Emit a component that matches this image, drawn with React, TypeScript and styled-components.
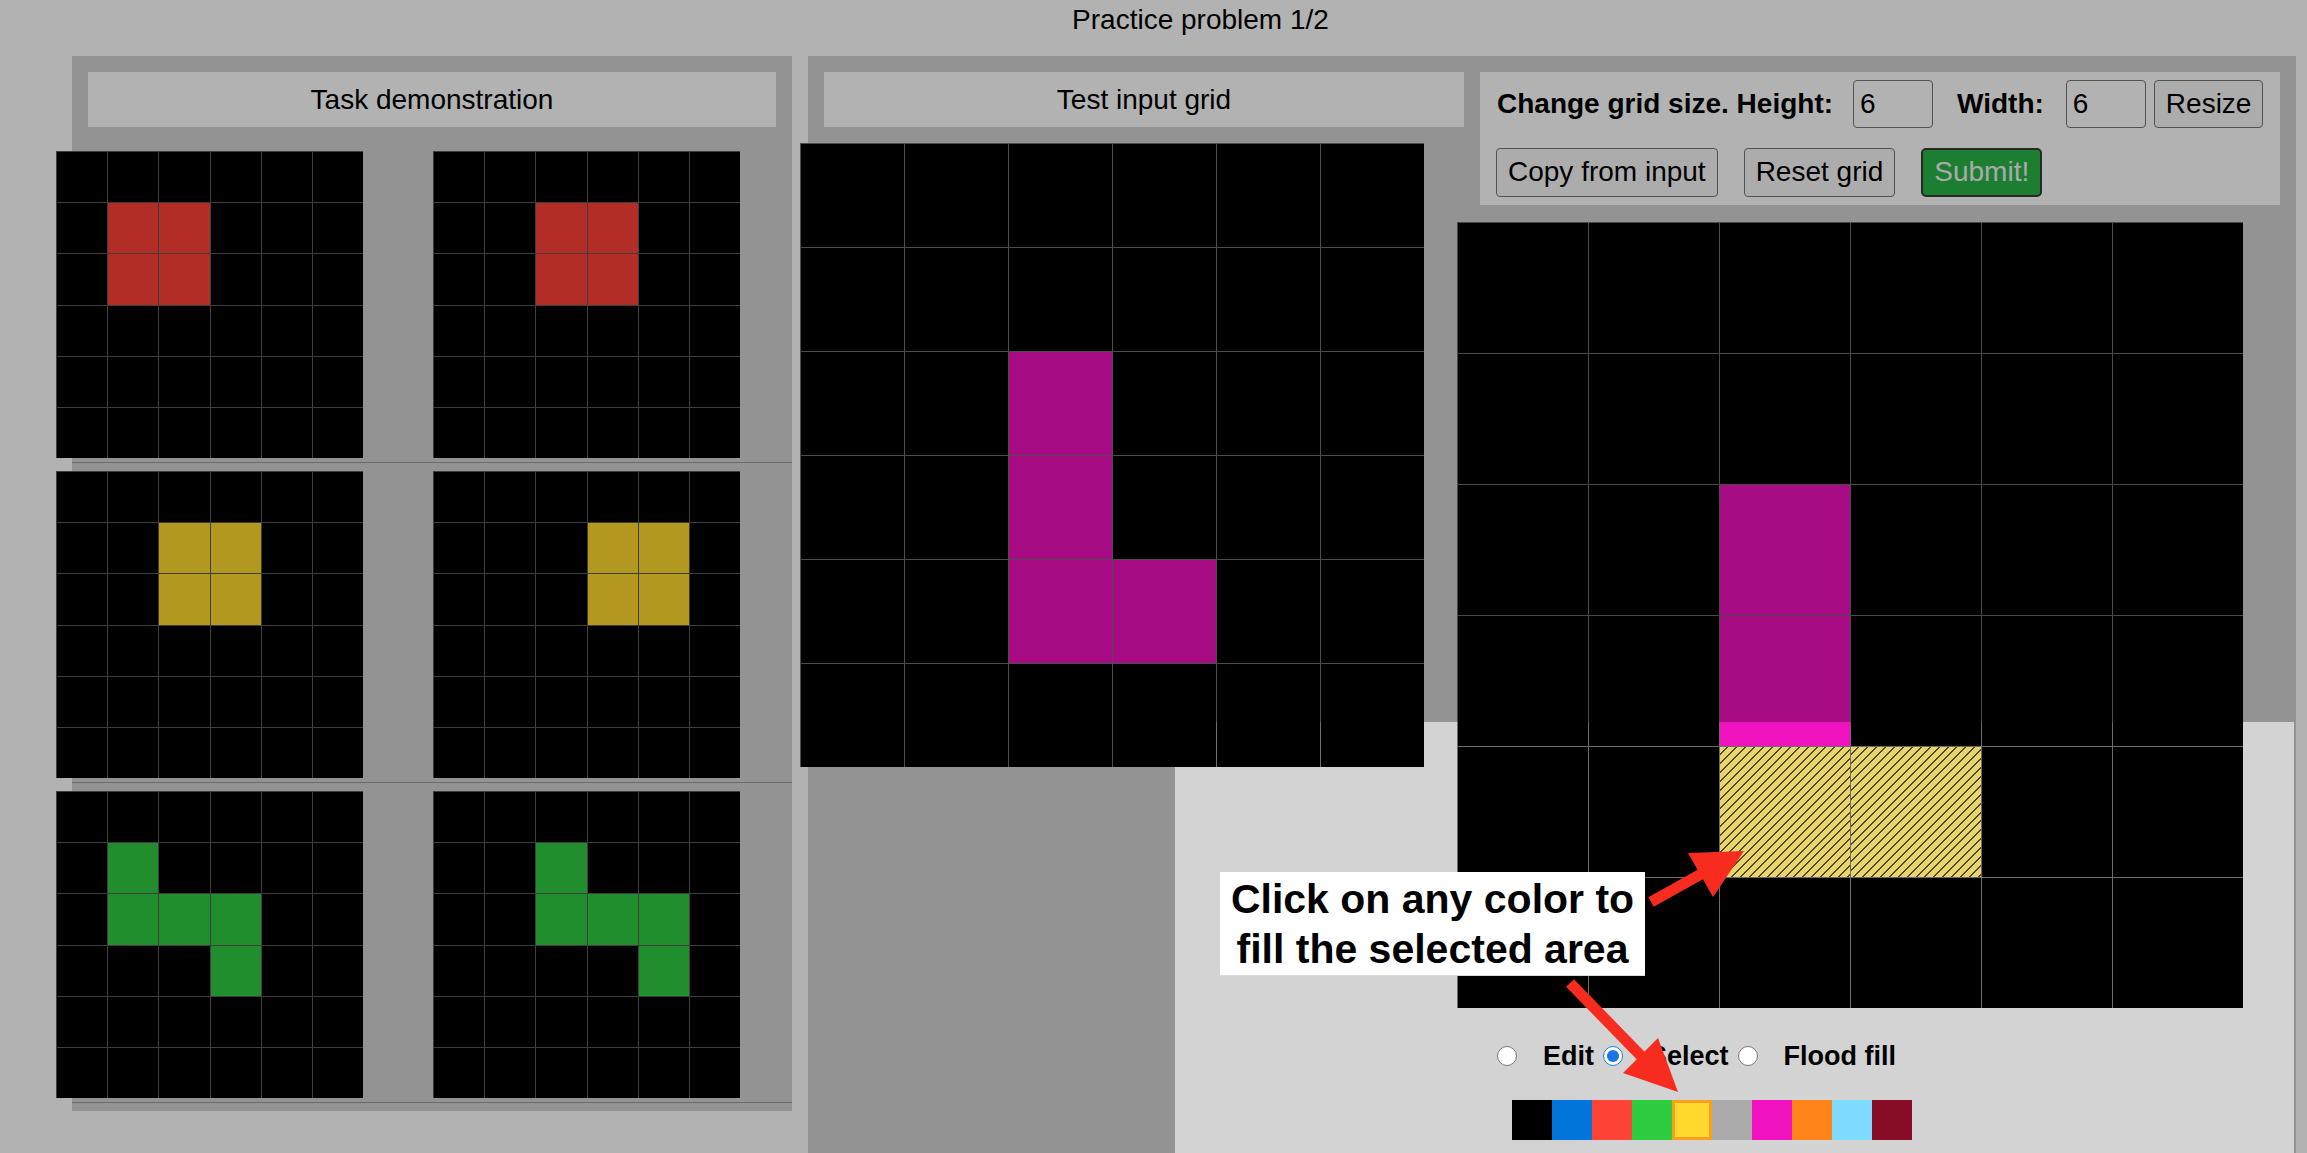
import React from "react";
import styled, { createGlobalStyle, css } from "styled-components";

const GlobalStyle = createGlobalStyle`
  html, body { margin: 0; padding: 0; overflow: hidden; background: #ffffff; }
  body { font-family: "Liberation Sans", Arial, Helvetica, sans-serif; color: #000; }
  * { box-sizing: border-box; }
`;

const ARC = [
  "#000000",
  "#0074D9",
  "#FF4136",
  "#2ECC40",
  "#FFDA2C",
  "#AAAAAA",
  "#F012BE",
  "#FF851B",
  "#7FDBFF",
  "#870C25",
];

type Pt = [number, number];

const makeGrid = (cells: Pt[], color: number): number[][] => {
  const g = Array.from({ length: 6 }, () => Array(6).fill(0));
  cells.forEach(([r, c]) => (g[r][c] = color));
  return g;
};

const examples: { input: number[][]; output: number[][] }[] = [
  {
    input: makeGrid([[1, 1], [1, 2], [2, 1], [2, 2]], 2),
    output: makeGrid([[1, 2], [1, 3], [2, 2], [2, 3]], 2),
  },
  {
    input: makeGrid([[1, 2], [1, 3], [2, 2], [2, 3]], 4),
    output: makeGrid([[1, 3], [1, 4], [2, 3], [2, 4]], 4),
  },
  {
    input: makeGrid([[1, 1], [2, 1], [2, 2], [2, 3], [3, 3]], 3),
    output: makeGrid([[1, 2], [2, 2], [2, 3], [2, 4], [3, 4]], 3),
  },
];

const testInput = makeGrid([[2, 2], [3, 2], [4, 2], [4, 3]], 6);
const testOutput = makeGrid([[2, 2], [3, 2]], 6);
const selected = new Set(["4-2", "4-3"]);

/* ---------- layout ---------- */

const Page = styled.div`
  position: relative;
  width: 2307px;
  height: 1153px;
  overflow: hidden;
  background: #ffffff;
`;

const Title = styled.div`
  height: 56px;
  padding: 4px 0 0 94px;
  text-align: center;
  font-size: 28px;
  line-height: 32px;
`;

const Workspace = styled.div`
  display: flex;
  align-items: flex-start;
  gap: 16px;
  padding-left: 72px;
`;

const Panel = styled.section<{ $width: number }>`
  width: ${(p) => p.$width}px;
  flex-shrink: 0;
  background: #d3d3d3;
`;

const DemoPanel = styled(Panel)`
  padding: 16px 16px 8px;
`;

const TestPanel = styled(Panel)`
  display: flex;
  gap: 16px;
  padding: 16px;
`;

const PanelHeader = styled.div`
  height: 55px;
  background: #ffffff;
  text-align: center;
  font-size: 28px;
  line-height: 55px;
`;

const ExampleList = styled.div`
  margin: 16px -16px 0;
`;

const ExampleRow = styled.div`
  display: flex;
  gap: 70px;
  padding: 8px 0 4px;
  border-bottom: 1px solid #9a9a9a;
  & > :first-child {
    margin-left: -16px;
  }
`;

const InputColumn = styled.div`
  width: 640px;
  flex-shrink: 0;
`;

const OutputColumn = styled.div`
  width: 800px;
  flex-shrink: 0;
`;

/* ---------- grids ---------- */

const Board = styled.div<{ $size: number }>`
  display: grid;
  grid-template-columns: repeat(6, 1fr);
  grid-template-rows: repeat(6, 1fr);
  width: ${(p) => p.$size}px;
  height: ${(p) => p.$size}px;
  flex-shrink: 0;
  background: #000;
`;

const TestBoard = styled(Board)`
  margin: 16px 0 0 -24px;
`;

const OutputBoard = styled(Board)`
  margin: 17px 0 0 -23px;
`;

const Cell = styled.div<{ $color: string; $line: string; $selected?: boolean }>`
  background: ${(p) => p.$color};
  border-top: 1px solid ${(p) => p.$line};
  border-left: 1px solid ${(p) => p.$line};
  ${(p) =>
    p.$selected &&
    css`
      background: repeating-linear-gradient(
        135deg,
        #e8d66c 0px,
        #e8d66c 4.9px,
        #4e4830 4.9px,
        #4e4830 6.3px
      );
    `}
`;

const GridView: React.FC<{
  data: number[][];
  line: string;
  sel?: Set<string>;
}> = ({ data, line, sel }) => (
  <>
    {data.map((row, r) =>
      row.map((v, c) => (
        <Cell
          key={`${r}-${c}`}
          $color={ARC[v]}
          $line={line}
          $selected={sel?.has(`${r}-${c}`)}
        />
      ))
    )}
  </>
);

/* ---------- controls ---------- */

const ControlBox = styled.div`
  height: 133px;
  background: #ffffff;
  padding: 8px 18px 8px 16px;
  display: flex;
  flex-direction: column;
  gap: 20px;
`;

const ControlRow = styled.div`
  display: flex;
  align-items: center;
  height: 48px;
`;

const BoldLabel = styled.span<{ $ml?: number }>`
  font-weight: bold;
  font-size: 28px;
  margin-left: ${(p) => p.$ml ?? 0}px;
  white-space: nowrap;
`;

const SizeInput = styled.input<{ $ml: number }>`
  width: 80px;
  height: 48px;
  margin-left: ${(p) => p.$ml}px;
  padding: 0 0 0 6px;
  border: 1px solid #767676;
  border-radius: 4px;
  background: #ffffff;
  font-family: inherit;
  font-size: 28px;
  color: #000;
`;

const Button = styled.button<{ $ml?: number; $primary?: boolean }>`
  height: 49px;
  margin-left: ${(p) => p.$ml ?? 0}px;
  padding: 0 11px;
  border: 1px solid #767676;
  border-radius: 4px;
  background: #f7f7f7;
  font-family: inherit;
  font-size: 28px;
  color: #000;
  white-space: nowrap;
  ${(p) =>
    p.$primary &&
    css`
      background: #27b547;
      color: #f4f4f4;
      border: 2px solid #3a3a3a;
      border-radius: 5px;
    `}
`;

const SmallButton = styled(Button)`
  height: 48px;
`;

const ModeRow = styled.div`
  display: flex;
  align-items: center;
  height: 32px;
  margin-top: 32px;
  padding-left: 17px;
`;

const Radio = styled.input`
  width: 20px;
  height: 20px;
  margin: 0 26px 0 0;
  accent-color: #1a73e8;
`;

const ModeLabel = styled.span`
  font-weight: bold;
  font-size: 27px;
  line-height: 32px;
  margin-right: 9px;
`;

const Palette = styled.div`
  display: flex;
  margin-top: 28px;
  padding-left: 32px;
`;

const Swatch = styled.div<{ $color: string; $active?: boolean }>`
  width: 40px;
  height: 40px;
  background: ${(p) => p.$color};
  ${(p) =>
    p.$active &&
    css`
      border: 3px solid #f9a11b;
    `}
`;

/* ---------- tutorial overlay ---------- */

const Spotlight = styled.div`
  position: absolute;
  left: 1175px;
  top: 722px;
  width: 1119px;
  height: 600px;
  box-shadow: 0 0 0 3000px rgba(0, 0, 0, 0.3);
  pointer-events: none;
  z-index: 5;
`;

const Callout = styled.div`
  position: absolute;
  left: 1220px;
  top: 872px;
  width: 425px;
  height: 104px;
  padding-top: 2px;
  background: #ffffff;
  border-bottom: 1px solid #dcdcdc;
  text-align: center;
  font-weight: bold;
  font-size: 41px;
  line-height: 50px;
  white-space: nowrap;
  z-index: 10;
`;

const ArrowLayer = styled.svg`
  position: absolute;
  left: 0;
  top: 0;
  pointer-events: none;
  z-index: 11;
`;

const RED = "#f72c1f";

export default function App() {
  return (
    <>
      <GlobalStyle />
      <Page>
        <Title>Practice problem 1/2</Title>
        <Workspace>
          <DemoPanel $width={720}>
            <PanelHeader>Task demonstration</PanelHeader>
            <ExampleList>
              {examples.map((ex, i) => (
                <ExampleRow key={i}>
                  <Board $size={307}>
                    <GridView data={ex.input} line="#5a5a5a" />
                  </Board>
                  <Board $size={307}>
                    <GridView data={ex.output} line="#5a5a5a" />
                  </Board>
                </ExampleRow>
              ))}
            </ExampleList>
          </DemoPanel>

          <TestPanel $width={1488}>
            <InputColumn>
              <PanelHeader>Test input grid</PanelHeader>
              <TestBoard $size={624}>
                <GridView data={testInput} line="#6e6e6e" />
              </TestBoard>
            </InputColumn>

            <OutputColumn>
              <ControlBox>
                <ControlRow>
                  <BoldLabel $ml={1}>Change grid size. Height:</BoldLabel>
                  <SizeInput $ml={20} defaultValue="6" />
                  <BoldLabel $ml={24}>Width:</BoldLabel>
                  <SizeInput $ml={22} defaultValue="6" />
                  <SmallButton $ml={8}>Resize</SmallButton>
                </ControlRow>
                <ControlRow>
                  <Button>Copy from input</Button>
                  <Button $ml={26}>Reset grid</Button>
                  <Button $ml={26} $primary>
                    Submit!
                  </Button>
                </ControlRow>
              </ControlBox>

              <OutputBoard $size={786}>
                <GridView data={testOutput} line="#6b6b6b" sel={selected} />
              </OutputBoard>

              <ModeRow>
                <Radio type="radio" name="mode" />
                <ModeLabel>Edit</ModeLabel>
                <Radio type="radio" name="mode" defaultChecked />
                <ModeLabel>Select</ModeLabel>
                <Radio type="radio" name="mode" />
                <ModeLabel>Flood fill</ModeLabel>
              </ModeRow>

              <Palette>
                {ARC.map((c, i) => (
                  <Swatch key={c} $color={c} $active={i === 4} />
                ))}
              </Palette>
            </OutputColumn>
          </TestPanel>
        </Workspace>

        <Spotlight />
        <Callout>
          Click on any color to
          <br />
          fill the selected area
        </Callout>
        <ArrowLayer width={2307} height={1153} viewBox="0 0 2307 1153">
          <line x1={1651} y1={902} x2={1703} y2={873} stroke={RED} strokeWidth={11} />
          <polygon points="1744,851 1688,853 1713,897" fill={RED} />
          <line x1={1570} y1={983} x2={1643} y2={1058} stroke={RED} strokeWidth={11} />
          <polygon points="1678,1092 1623,1073 1658,1038" fill={RED} />
        </ArrowLayer>
      </Page>
    </>
  );
}
